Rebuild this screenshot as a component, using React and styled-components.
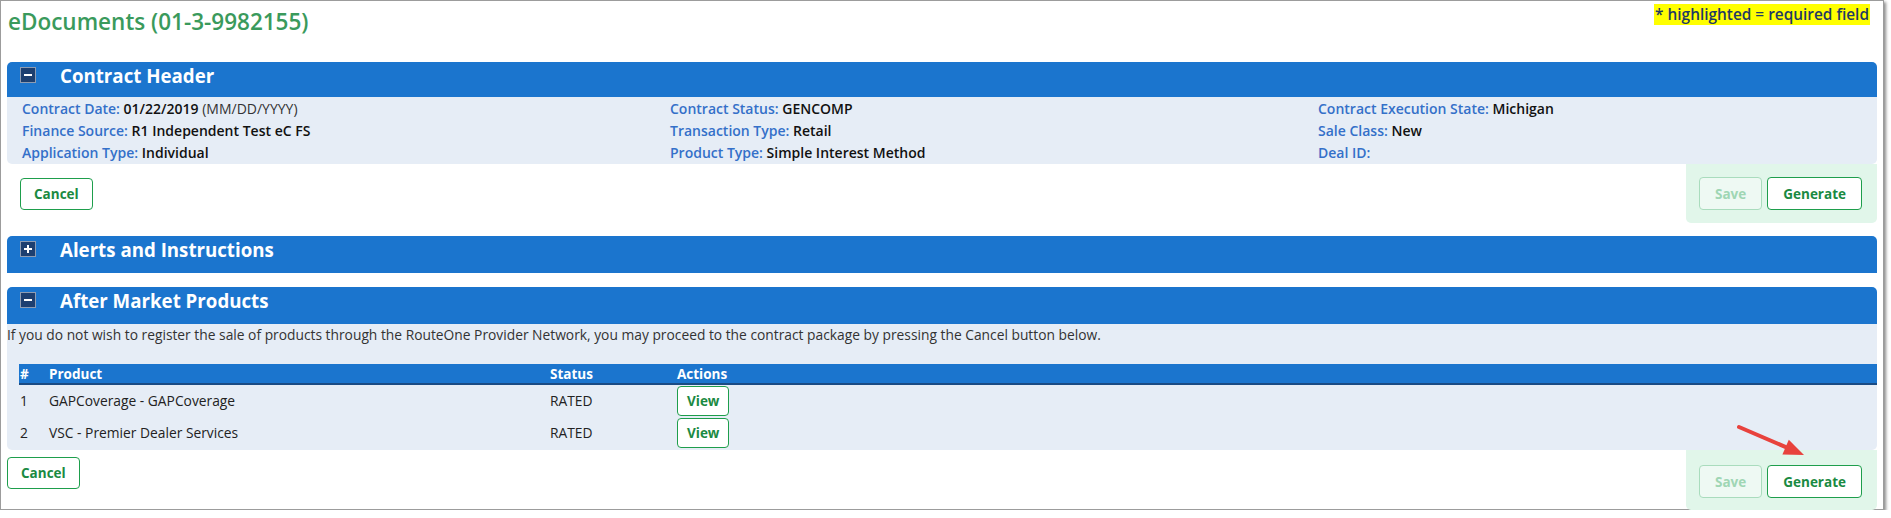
import React from "react";
import styled, { createGlobalStyle } from "styled-components";

const GlobalStyle = createGlobalStyle`
  body {
    margin: 0;
    background: #ffffff;
    font-family: "Open Sans", "Liberation Sans", sans-serif;
    color: #222222;
  }
`;

const Frame = styled.div`
  position: relative;
  box-sizing: border-box;
  width: 1884px;
  height: 510px;
  border: 1px solid #9c9c9c;
  box-shadow: 2px 2px 3px rgba(0, 0, 0, 0.45);
  padding: 0 6px;
`;

const TopBar = styled.div`
  display: flex;
  justify-content: space-between;
  align-items: flex-start;
  height: 61px;
`;

const PageTitle = styled.h1`
  margin: 6px 0 0 1px;
  font-size: 22.5px;
  line-height: 30px;
  font-weight: 600;
  color: #3a9a5c;
`;

const RequiredNote = styled.span`
  margin: 3px 7px 0 0;
  padding: 0 1px;
  background: #ffff00;
  color: #1f3a64;
  font-size: 15.4px;
  line-height: 21px;
  font-weight: 600;
`;

const Panel = styled.section`
  margin-top: ${(p) => p.$top || 0}px;
`;

const SectionBar = styled.div`
  display: flex;
  align-items: flex-start;
  box-sizing: border-box;
  height: ${(p) => p.$h}px;
  padding: 5px 0 0 13px;
  background: #1b75ce;
  border-radius: 5px 5px 0 0;
`;

const ToggleBox = styled.span`
  position: relative;
  box-sizing: border-box;
  width: 16px;
  height: 16px;
  background: #1d3f70;
  border: 1px solid #8e9cb2;

  &::before,
  &::after {
    content: "";
    position: absolute;
    background: #ffffff;
  }
  &::before {
    left: 3px;
    top: 6px;
    width: 8px;
    height: 2px;
  }
  &::after {
    display: ${(p) => (p.$open ? "none" : "block")};
    left: 6px;
    top: 3px;
    width: 2px;
    height: 8px;
  }
`;

const SectionTitle = styled.h2`
  margin: -3px 0 0 24px;
  font-size: 18.7px;
  line-height: 24px;
  font-weight: 700;
  color: #ffffff;
`;

const InfoGrid = styled.div`
  display: grid;
  grid-template-columns: 648px 648px 1fr;
  padding: 1px 0 0 15px;
  background: #e6edf6;
  border-radius: 0 0 5px 5px;
  font-size: 14px;
  line-height: 22px;
`;

const Field = styled.div`
  white-space: nowrap;
`;

const Label = styled.span`
  color: #3470c9;
  font-weight: 600;
`;

const Value = styled.span`
  color: #111111;
  font-weight: 600;
`;

const Hint = styled.span`
  color: #333333;
  font-weight: 400;
`;

const ActionRow = styled.div`
  display: flex;
  justify-content: space-between;
  align-items: flex-start;
`;

const LeftActions = styled.div`
  padding: ${(p) => p.$pad};
`;

const SubmitBox = styled.div`
  display: flex;
  gap: 5px;
  padding: ${(p) => p.$pad};
  background: #e1f6ea;
  border-radius: 0 0 5px 5px;
`;

const Button = styled.button`
  box-sizing: border-box;
  height: ${(p) => p.$h || 32}px;
  padding: 0 ${(p) => p.$px || 13}px;
  border: 1px solid #1e9e4c;
  border-radius: 4px;
  background: #ffffff;
  color: #1a8a42;
  font-family: "Open Sans", "Liberation Sans", sans-serif;
  font-size: 13.5px;
  font-weight: 700;
  cursor: pointer;

  &:disabled {
    background: #eef9f3;
    border-color: #a9dcbd;
    color: #9fd6b4;
    cursor: default;
  }
`;

const ProductsBody = styled.div`
  padding: 0 0 1px;
  background: #e6edf6;
  border-radius: 0 0 5px 5px;
  font-size: 13.8px;
`;

const Notice = styled.p`
  margin: 0;
  line-height: 22px;
  color: #333333;
`;

const Table = styled.div`
  margin: 18px 0 0 12px;
`;

const TableRow = styled.div`
  display: grid;
  grid-template-columns: 29px 501px 127px 1fr;
  align-items: center;
  height: ${(p) => (p.$head ? 21 : 32)}px;
  box-sizing: border-box;
  background: ${(p) => (p.$head ? "#1b75ce" : "transparent")};
  border-bottom: ${(p) => (p.$head ? "2px solid #1a4b84" : "none")};
  color: ${(p) => (p.$head ? "#ffffff" : "#222222")};
  font-weight: ${(p) => (p.$head ? 700 : 400)};
  font-size: ${(p) => (p.$head ? 13.5 : 13.8)}px;
  line-height: 18px;
`;

const Cell = styled.div`
  padding-left: 1px;
  white-space: nowrap;
`;

const Arrow = styled.svg`
  position: absolute;
  left: 1729px;
  top: 417px;
  pointer-events: none;
`;

const products = [
  { n: 1, name: "GAPCoverage - GAPCoverage", status: "RATED" },
  { n: 2, name: "VSC - Premier Dealer Services", status: "RATED" },
];

const SubmitButtons = ({ pad }) => (
  <SubmitBox $pad={pad}>
    <Button $h={33} $px={15} disabled>
      Save
    </Button>
    <Button $h={33} $px={15}>
      Generate
    </Button>
  </SubmitBox>
);

export default function App() {
  return (
    <>
      <GlobalStyle />
      <Frame>
        <TopBar>
          <PageTitle>eDocuments (01-3-9982155)</PageTitle>
          <RequiredNote>* highlighted = required field</RequiredNote>
        </TopBar>

        <Panel>
          <SectionBar $h={35}>
            <ToggleBox $open />
            <SectionTitle>Contract Header</SectionTitle>
          </SectionBar>
          <InfoGrid>
            <Field>
              <Label>Contract Date:</Label> <Value>01/22/2019</Value>{" "}
              <Hint>(MM/DD/YYYY)</Hint>
            </Field>
            <Field>
              <Label>Contract Status:</Label> <Value>GENCOMP</Value>
            </Field>
            <Field>
              <Label>Contract Execution State:</Label> <Value>Michigan</Value>
            </Field>
            <Field>
              <Label>Finance Source:</Label>{" "}
              <Value>R1 Independent Test eC FS</Value>
            </Field>
            <Field>
              <Label>Transaction Type:</Label> <Value>Retail</Value>
            </Field>
            <Field>
              <Label>Sale Class:</Label> <Value>New</Value>
            </Field>
            <Field>
              <Label>Application Type:</Label> <Value>Individual</Value>
            </Field>
            <Field>
              <Label>Product Type:</Label>{" "}
              <Value>Simple Interest Method</Value>
            </Field>
            <Field>
              <Label>Deal ID:</Label>
            </Field>
          </InfoGrid>
          <ActionRow>
            <LeftActions $pad="14px 0 0 13px">
              <Button>Cancel</Button>
            </LeftActions>
            <SubmitButtons pad="13px 15px 13px 13px" />
          </ActionRow>
        </Panel>

        <Panel $top={13}>
          <SectionBar $h={37}>
            <ToggleBox />
            <SectionTitle>Alerts and Instructions</SectionTitle>
          </SectionBar>
        </Panel>

        <Panel $top={14}>
          <SectionBar $h={37}>
            <ToggleBox $open />
            <SectionTitle>After Market Products</SectionTitle>
          </SectionBar>
          <ProductsBody>
            <Notice>
              If you do not wish to register the sale of products through the
              RouteOne Provider Network, you may proceed to the contract package
              by pressing the Cancel button below.
            </Notice>
            <Table>
              <TableRow $head>
                <Cell>#</Cell>
                <Cell>Product</Cell>
                <Cell>Status</Cell>
                <Cell>Actions</Cell>
              </TableRow>
              {products.map((p) => (
                <TableRow key={p.n}>
                  <Cell>{p.n}</Cell>
                  <Cell>{p.name}</Cell>
                  <Cell>{p.status}</Cell>
                  <Cell>
                    <Button $h={30} $px={9}>
                      View
                    </Button>
                  </Cell>
                </TableRow>
              ))}
            </Table>
          </ProductsBody>
          <ActionRow>
            <LeftActions $pad="7px 0 0 0">
              <Button>Cancel</Button>
            </LeftActions>
            <SubmitButtons pad="15px 15px 12px 13px" />
          </ActionRow>
        </Panel>

        <Arrow width="80" height="44" viewBox="0 0 80 44">
          <line
            x1="9"
            y1="9"
            x2="57"
            y2="29.6"
            stroke="#e8423d"
            strokeWidth="4"
            strokeLinecap="round"
          />
          <polygon points="74,37 58.8,21.8 52.4,36.4" fill="#e8423d" />
        </Arrow>
      </Frame>
    </>
  );
}
